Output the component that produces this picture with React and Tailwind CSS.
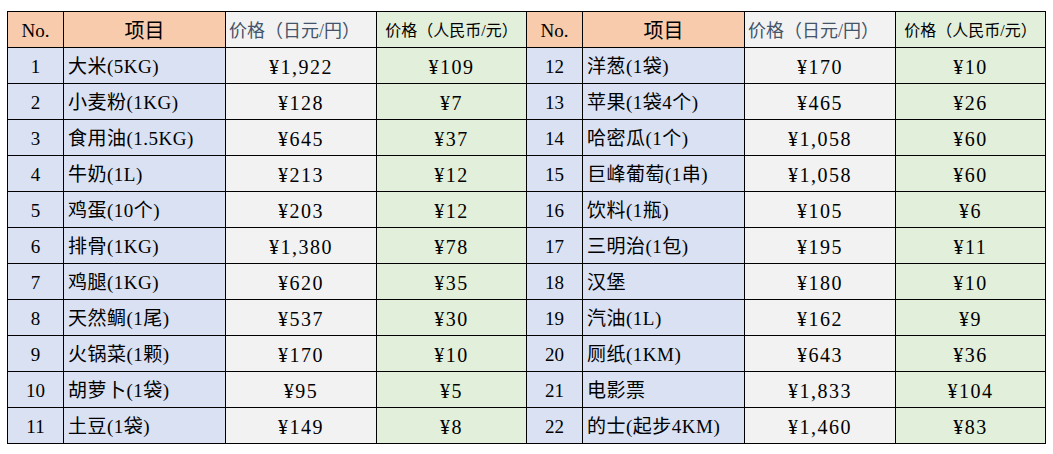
import React from 'react';

const left = [
  ['1', '大米(5KG)', '¥1,922', '¥109'],
  ['2', '小麦粉(1KG)', '¥128', '¥7'],
  ['3', '食用油(1.5KG)', '¥645', '¥37'],
  ['4', '牛奶(1L)', '¥213', '¥12'],
  ['5', '鸡蛋(10个)', '¥203', '¥12'],
  ['6', '排骨(1KG)', '¥1,380', '¥78'],
  ['7', '鸡腿(1KG)', '¥620', '¥35'],
  ['8', '天然鲷(1尾)', '¥537', '¥30'],
  ['9', '火锅菜(1颗)', '¥170', '¥10'],
  ['10', '胡萝卜(1袋)', '¥95', '¥5'],
  ['11', '土豆(1袋)', '¥149', '¥8'],
];

const right = [
  ['12', '洋葱(1袋)', '¥170', '¥10'],
  ['13', '苹果(1袋4个)', '¥465', '¥26'],
  ['14', '哈密瓜(1个)', '¥1,058', '¥60'],
  ['15', '巨峰葡萄(1串)', '¥1,058', '¥60'],
  ['16', '饮料(1瓶)', '¥105', '¥6'],
  ['17', '三明治(1包)', '¥195', '¥11'],
  ['18', '汉堡', '¥180', '¥10'],
  ['19', '汽油(1L)', '¥162', '¥9'],
  ['20', '厕纸(1KM)', '¥643', '¥36'],
  ['21', '电影票', '¥1,833', '¥104'],
  ['22', '的士(起步4KM)', '¥1,460', '¥83'],
];

const cell = 'border border-black h-[36px] p-0 whitespace-nowrap overflow-hidden';

function HeaderCells() {
  return (
    <>
      <th className={`${cell} bg-[#f8cbad] text-center text-[19px] font-normal pt-[2px]`}>No.</th>
      <th className={`${cell} bg-[#f8cbad] text-center text-[20px] font-normal pt-[2px]`}>项目</th>
      <th className={`${cell} bg-[#f2f2f2] text-left pl-[3px] text-[18px] font-normal text-[#44546a] pt-[2px]`}>价格（日元/円）</th>
      <th className={`${cell} bg-[#e2efda] text-center text-[16px] font-normal pt-[2px]`}>价格（人民币/元）</th>
    </>
  );
}

function RowCells({ row }) {
  const [no, name, jpy, rmb] = row;
  return (
    <>
      <td className={`${cell} bg-[#d9e1f2] text-center pt-[2px]`}>{no}</td>
      <td className={`${cell} bg-[#d9e1f2] text-left pl-[4px] pt-[2px] tracking-[0.5px]`}>{name}</td>
      <td className={`${cell} bg-[#f2f2f2] text-center pt-[2px] text-[20px] tracking-[1.5px]`}>{jpy}</td>
      <td className={`${cell} bg-[#e2efda] text-center pt-[2px] text-[20px] tracking-[1.5px]`}>{rmb}</td>
    </>
  );
}

export default function App() {
  return (
    <div className="w-[1053px] h-[454px] bg-white pt-[11px] pl-[7px]">
      <table
        className="table-fixed border-collapse text-black text-[19px] leading-none"
        style={{ fontFamily: '"Liberation Serif", "Noto Sans CJK SC", serif' }}
      >
        <colgroup>
          <col className="w-[56px]" />
          <col className="w-[162px]" />
          <col className="w-[151px]" />
          <col className="w-[150px]" />
          <col className="w-[56px]" />
          <col className="w-[162px]" />
          <col className="w-[151px]" />
          <col className="w-[150px]" />
        </colgroup>
        <thead>
          <tr>
            <HeaderCells />
            <HeaderCells />
          </tr>
        </thead>
        <tbody>
          {left.map((row, i) => (
            <tr key={row[0]}>
              <RowCells row={row} />
              <RowCells row={right[i]} />
            </tr>
          ))}
        </tbody>
      </table>
    </div>
  );
}
